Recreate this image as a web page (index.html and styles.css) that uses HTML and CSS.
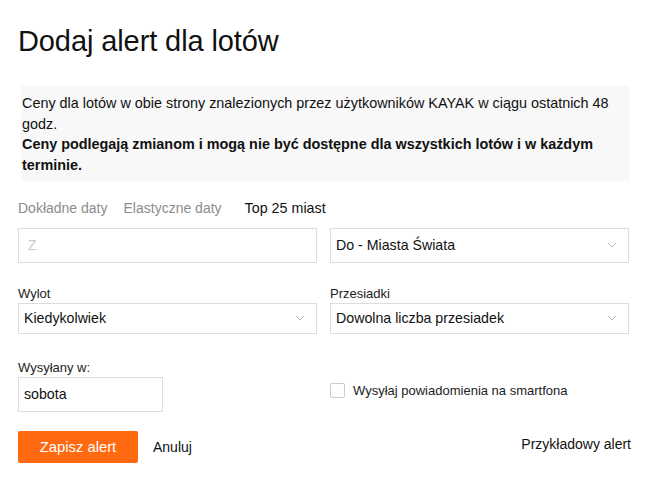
FILE: index.html
```html
<!DOCTYPE html>
<html lang="pl">
<head>
<meta charset="utf-8">
<link rel="stylesheet" href="styles.css">
</head>
<body>
<div class="page">
  <h1 class="title">Dodaj alert dla lotów</h1>
  <div class="info">
    <p>Ceny dla lotów w obie strony znalezionych przez użytkowników KAYAK w ciągu ostatnich 48 godz.</p>
    <p class="bold">Ceny podlegają zmianom i mogą nie być dostępne dla wszystkich lotów i w każdym terminie.</p>
  </div>
  <div class="tabs">
    <span class="tab">Dokładne daty</span>
    <span class="tab">Elastyczne daty</span>
    <span class="tab active">Top 25 miast</span>
  </div>
  <div class="row row-first">
    <div class="field input tall placeholder">Z</div>
    <div class="field select tall">Do - Miasta Świata<svg class="chev" width="10" height="6" viewBox="0 0 10 6"><path d="M1 1l4 4 4-4" fill="none" stroke="#bbb" stroke-width="1"/></svg></div>
  </div>
  <div class="row row-second">
    <div class="col">
      <label class="label">Wylot</label>
      <div class="field select">Kiedykolwiek<svg class="chev" width="10" height="6" viewBox="0 0 10 6"><path d="M1 1l4 4 4-4" fill="none" stroke="#bbb" stroke-width="1"/></svg></div>
    </div>
    <div class="col">
      <label class="label">Przesiadki</label>
      <div class="field select">Dowolna liczba przesiadek<svg class="chev" width="10" height="6" viewBox="0 0 10 6"><path d="M1 1l4 4 4-4" fill="none" stroke="#bbb" stroke-width="1"/></svg></div>
    </div>
  </div>
  <div class="row row-third">
    <div class="col">
      <label class="label">Wysyłany w:</label>
      <div class="field input small tall">sobota</div>
    </div>
    <div class="col check-col">
      <span class="checkbox"></span>
      <span class="check-text">Wysyłaj powiadomienia na smartfona</span>
    </div>
  </div>
  <div class="actions">
    <button class="btn">Zapisz alert</button>
    <span class="cancel">Anuluj</span>
    <span class="sample">Przykładowy alert</span>
  </div>
</div>
</body>
</html>
```

FILE: styles.css
```css
html, body {
  margin: 0;
  padding: 0;
  background: #fff;
}
body {
  font-family: "Liberation Sans", Arial, sans-serif;
  color: #1a1a1a;
}
.page {
  padding: 0 19px 0 18px;
}
.title {
  margin: 0;
  padding-top: 24px;
  font-size: 29px;
  font-weight: normal;
  line-height: 34px;
  letter-spacing: -0.1px;
  color: #111;
}
.info {
  margin: 28px 0 0 3px;
  background: #f8f8f8;
  padding: 7px 14px 5px 1px;
  font-size: 14.4px;
  line-height: 20.7px;
  color: #111;
}
.info p {
  margin: 0;
}
.info .bold {
  font-weight: bold;
}
.tabs {
  display: flex;
  gap: 16px;
  margin-top: 17px;
  font-size: 14px;
  line-height: 20px;
}
.tab {
  color: #8c8c8c;
}
.tab.active {
  color: #111;
  margin-left: 7px;
  font-size: 14.3px;
}
.row {
  display: grid;
  grid-template-columns: 299px 299px;
  column-gap: 13px;
}
.row-first {
  margin-top: 10px;
}
.row-second {
  margin-top: 23px;
}
.row-third {
  margin-top: 26px;
}
.field {
  box-sizing: border-box;
  border: 1px solid #ddd;
  height: 31px;
  display: flex;
  align-items: center;
  padding: 0 8px 0 5px;
  font-size: 14.2px;
  color: #111;
  position: relative;
}
.field.tall {
  height: 35px;
}
.placeholder {
  color: #ccc;
  font-size: 14px;
  padding-left: 9px;
}
.select {
  justify-content: space-between;
}
.chev {
  margin-right: 3px;
}
.label {
  display: block;
  font-size: 13px;
  line-height: 16px;
  margin-bottom: 1px;
  color: #222;
}
.small {
  width: 145px;
}
.check-col {
  display: flex;
  align-items: center;
  padding-top: 10px;
}
.checkbox {
  width: 15px;
  height: 15px;
  box-sizing: border-box;
  border: 1px solid #ccc;
  border-radius: 2px;
  margin-right: 8px;
  background: #fff;
}
.check-text {
  font-size: 13px;
  color: #222;
}
.actions {
  display: flex;
  align-items: center;
  margin-top: 19px;
}
.btn {
  width: 120px;
  height: 32px;
  border: none;
  border-radius: 2px;
  background: #ff690f;
  color: #fff;
  font-family: "Liberation Sans", Arial, sans-serif;
  font-size: 14.8px;
  padding: 0;
}
.cancel {
  margin-left: 15px;
  font-size: 14px;
  color: #111;
}
.sample {
  margin-left: auto;
  margin-right: -2px;
  font-size: 14px;
  color: #111;
  position: relative;
  top: -3px;
}
```
